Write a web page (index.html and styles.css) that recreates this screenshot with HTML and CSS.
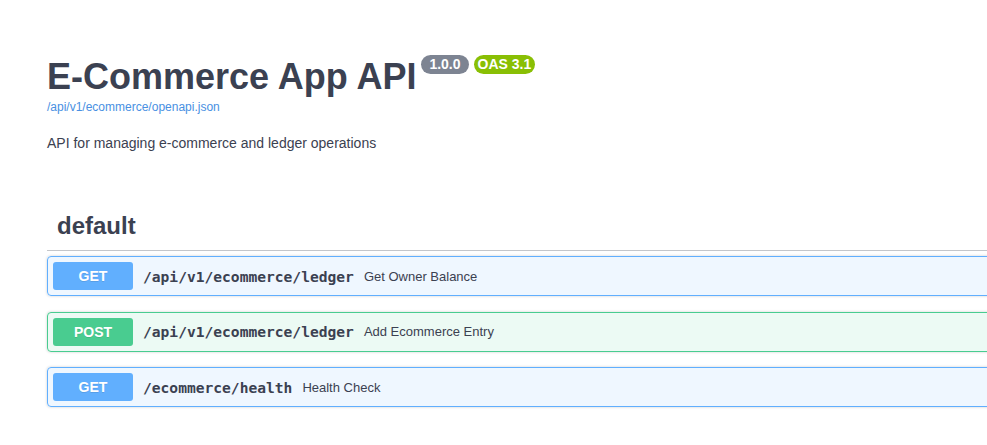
FILE: index.html
```html
<!DOCTYPE html>
<html lang="en">
<head>
<meta charset="utf-8">
<title>E-Commerce App API</title>
<link rel="stylesheet" href="styles.css">
</head>
<body>
<div class="wrapper">
  <section class="info">
    <hgroup class="main">
      <h2 class="title">
        <span class="title-text">E-Commerce App API</span>
        <span class="badges">
          <small class="badge badge-version">1.0.0</small>
          <small class="badge badge-oas">OAS 3.1</small>
        </span>
      </h2>
      <a class="base-url" href="#">/api/v1/ecommerce/openapi.json</a>
    </hgroup>
    <p class="description">API for managing e-commerce and ledger operations</p>
  </section>

  <section class="tag-section">
    <h3 class="opblock-tag"><span>default</span></h3>
    <div class="opblock opblock-get">
      <div class="summary">
        <span class="method">GET</span>
        <span class="path">/api/v1/ecommerce/ledger</span>
        <span class="summary-desc">Get Owner Balance</span>
      </div>
    </div>
    <div class="opblock opblock-post">
      <div class="summary">
        <span class="method">POST</span>
        <span class="path">/api/v1/ecommerce/ledger</span>
        <span class="summary-desc">Add Ecommerce Entry</span>
      </div>
    </div>
    <div class="opblock opblock-get">
      <div class="summary">
        <span class="method">GET</span>
        <span class="path">/ecommerce/health</span>
        <span class="summary-desc">Health Check</span>
      </div>
    </div>
  </section>
</div>
</body>
</html>
```

FILE: styles.css
```css
html {
  overflow: hidden;
}

body {
  margin: 0;
  background: #ffffff;
  font-family: "Liberation Sans", Arial, sans-serif;
  color: #3b4151;
}

.wrapper {
  padding-left: 47px;
  margin-right: -60px;
}

.info {
  padding-top: 56px;
}

.main {
  margin: 0 0 21px;
}

.title {
  display: flex;
  align-items: flex-start;
  margin: 0;
  font-size: 36px;
  line-height: 42px;
  font-weight: bold;
  color: #3b4151;
}

.badges {
  display: flex;
  gap: 5px;
  margin-left: 5px;
  margin-top: -1px;
}

.badge {
  display: inline-block;
  height: 19px;
  line-height: 19px;
  padding: 0 8px;
  border-radius: 10px;
  font-size: 14px;
  font-weight: bold;
  color: #ffffff;
}

.badge-version {
  background: #7d8492;
}

.badge-oas {
  background: #89bf04;
  padding: 0 4px;
}

.base-url {
  display: block;
  font-size: 12px;
  line-height: 14px;
  color: #4990e2;
  text-decoration: none;
  margin-top: 2px;
}

.description {
  margin: 0;
  font-size: 14px;
  line-height: 16px;
  color: #3b4151;
}

.tag-section {
  margin-top: 51px;
}

.opblock-tag {
  margin: 0 0 5px;
  padding: 10px 20px 10px 10px;
  border-bottom: 1px solid rgba(59, 65, 81, 0.3);
  font-size: 24px;
  line-height: 28px;
  font-weight: bold;
  color: #3b4151;
}

.opblock {
  margin: 0 0 15.5px;
  border: 1px solid #61affe;
  border-radius: 4px;
  box-shadow: 0 0 3px rgba(0, 0, 0, 0.19);
}

.opblock-get {
  background: rgba(97, 175, 254, 0.1);
  border-color: #61affe;
}

.opblock-post {
  background: rgba(73, 204, 144, 0.1);
  border-color: #49cc90;
}

.summary {
  display: flex;
  align-items: center;
  padding: 5px;
}

.method {
  min-width: 80px;
  height: 28px;
  line-height: 28px;
  border-radius: 3px;
  text-align: center;
  font-size: 14px;
  font-weight: bold;
  color: #ffffff;
  text-shadow: 0 1px 0 rgba(0, 0, 0, 0.1);
}

.opblock-get .method {
  background: #61affe;
}

.opblock-post .method {
  background: #49cc90;
}

.path {
  padding: 0 10px;
  font-family: "DejaVu Sans Mono", "Liberation Mono", monospace;
  font-size: 14.6px;
  font-weight: bold;
  color: #3b4151;
}

.summary-desc {
  font-size: 13px;
  color: #3b4151;
}
```
